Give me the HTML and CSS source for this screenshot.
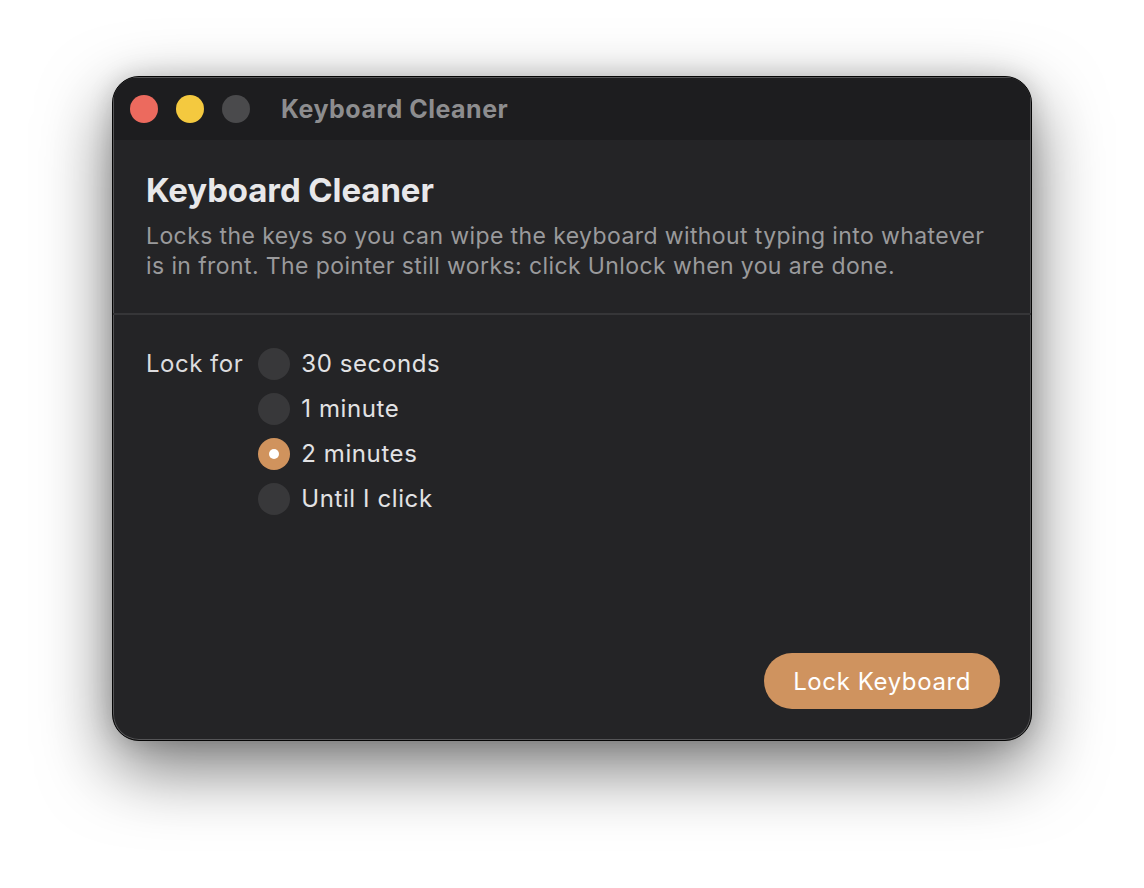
FILE: index.html
```html
<!DOCTYPE html>
<html lang="en">
<head>
    <meta charset="UTF-8">
    <meta name="viewport" content="width=device-width, initial-scale=1.0">
    <title>Keyboard Cleaner</title>
    <link rel="stylesheet" href="styles.css">
</head>
<body>
    <div class="window">
        <div class="titlebar">
            <div class="lights">
                <span class="light close"></span>
                <span class="light minimize"></span>
                <span class="light zoom"></span>
            </div>
            <div class="window-title">Keyboard Cleaner</div>
        </div>

        <div class="intro">
            <h1>Keyboard Cleaner</h1>
            <p>Locks the keys so you can wipe the keyboard without typing into whatever is in front. The pointer still works: click Unlock when you are done.</p>
        </div>

        <div class="options">
            <div class="option-label">Lock for</div>
            <div class="radio-list">
                <label class="radio"><span class="dot"></span>30 seconds</label>
                <label class="radio"><span class="dot"></span>1 minute</label>
                <label class="radio checked"><span class="dot"></span>2 minutes</label>
                <label class="radio"><span class="dot"></span>Until I click</label>
            </div>
        </div>

        <div class="actions">
            <button class="primary">Lock Keyboard</button>
        </div>
    </div>
</body>
</html>
```

FILE: styles.css
```css
html {
    background-color: #ffffff;
}

body {
    font-family: Inter, "Noto Sans", sans-serif;
    margin: 0;
    padding: 76px 0 147px;
    background-color: #ffffff;
}

.window {
    box-sizing: border-box;
    width: 920px;
    height: 665px;
    margin: 0 auto;
    display: flex;
    flex-direction: column;
    background-color: #242426;
    border: 1px solid #050505;
    border-radius: 27px;
    box-shadow: inset 0 0 0 1px #555557, 0 26px 70px rgba(0, 0, 0, 0.55), 0 0 24px rgba(0, 0, 0, 0.15);
    overflow: hidden;
}

.titlebar {
    height: 63px;
    flex-shrink: 0;
    display: flex;
    align-items: center;
    padding-left: 17px;
    background-color: #1d1d1f;
    box-shadow: inset 1px 1px 0 #555557, inset -1px 0 0 #555557;
}

.lights {
    display: flex;
    gap: 18px;
}

.light {
    width: 28px;
    height: 28px;
    border-radius: 50%;
}

.light.close {
    background-color: #ec6a5e;
}

.light.minimize {
    background-color: #f4c93f;
}

.light.zoom {
    background-color: #4a4a4c;
}

.window-title {
    margin-left: 31px;
    font-size: 25px;
    font-weight: 700;
    color: #8d8d8f;
    letter-spacing: 0.5px;
}

.intro {
    padding: 30px 33px 32px;
    border-bottom: 2px solid #363638;
}

.intro h1 {
    margin: 0;
    font-size: 33px;
    line-height: 40px;
    font-weight: 700;
    color: #e8e8ea;
    letter-spacing: -0.1px;
}

.intro p {
    margin: 11px 0 0;
    font-size: 23px;
    line-height: 30px;
    color: #9a9a9c;
    letter-spacing: 0.4px;
    max-width: 850px;
}

.options {
    flex: 1;
    display: flex;
    gap: 15px;
    padding: 26px 33px 0;
}

.option-label {
    font-size: 24px;
    line-height: 45px;
    color: #dcdcde;
    letter-spacing: 0.5px;
}

.radio-list {
    display: flex;
    flex-direction: column;
}

.radio {
    display: flex;
    align-items: center;
    gap: 11px;
    height: 45px;
    font-size: 24px;
    color: #e2e2e4;
    letter-spacing: 0.6px;
}

.radio .dot {
    width: 32px;
    height: 32px;
    border-radius: 50%;
    background-color: #38383a;
    display: flex;
    align-items: center;
    justify-content: center;
}

.radio.checked .dot {
    background-color: #d0935d;
}

.radio.checked .dot::after {
    content: "";
    width: 10px;
    height: 10px;
    border-radius: 50%;
    background-color: #ffffff;
}

.actions {
    display: flex;
    justify-content: flex-end;
    padding: 0 31px 31px;
}

.primary {
    font-family: inherit;
    height: 56px;
    padding: 0 29px;
    border: none;
    border-radius: 28px;
    background-color: #cf935f;
    color: #ffffff;
    font-size: 24px;
    letter-spacing: 0.6px;
}
```
